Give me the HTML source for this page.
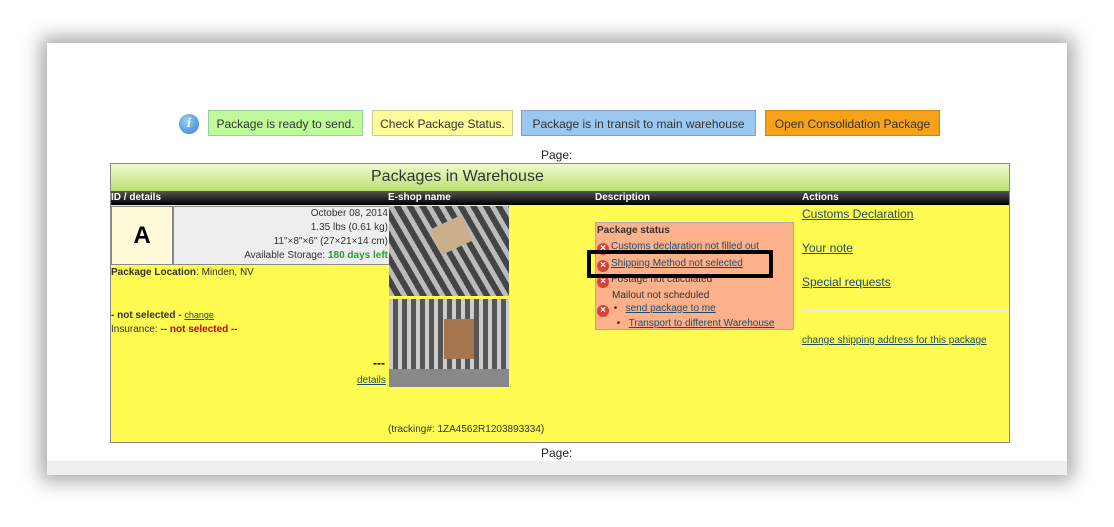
<!DOCTYPE html>
<html><head><meta charset="utf-8"><style>
body{margin:0;width:1114px;height:527px;background:#fff;position:relative;overflow:hidden;font-family:"Liberation Sans",sans-serif;}
.frame{position:absolute;left:47px;top:43px;width:1020px;height:432px;background:#fff;box-shadow:0 0 18px 6px rgba(0,0,0,.35);}
.band{position:absolute;left:0;top:418px;width:1020px;height:14px;background:#eee;}
.a{position:absolute;}
.box{position:absolute;top:110px;height:26px;line-height:26px;font-size:12px;color:#333;border:1px solid;text-align:center;box-sizing:border-box;}
.lnk{color:#1a4d6e;text-decoration:underline;}
.sm{font-size:10px;}
.x{display:inline-block;width:12px;height:12px;border-radius:50%;background:#d9413a;color:#fff;font-size:10px;font-weight:bold;line-height:12px;text-align:center;vertical-align:-2px;margin-right:2px}
</style></head><body>
<div class="frame"><div class="band"></div></div>
<div class="a" style="left:179px;top:114px;width:20px;height:20px;border-radius:50%;background:radial-gradient(circle at 40% 35%,#9cd0f5,#2a7fd0);color:#fff;font:italic bold 14px 'Liberation Serif',serif;text-align:center;line-height:20px">i</div>
<div class="box" style="left:208px;width:155px;background:#bff99a;border-color:#9c9">Package is ready to send.</div>
<div class="box" style="left:372px;width:141px;background:#fffb99;border-color:#cc9">Check Package Status.</div>
<div class="box" style="left:521px;width:235px;background:#9cc8f0;border-color:#89b">Package is in transit to main warehouse</div>
<div class="box" style="left:765px;width:175px;background:#f7a21b;border-color:#c80">Open Consolidation Package</div>
<div class="a" style="left:541px;top:148px;font-size:12px;color:#222">Page:</div>
<div class="a" style="left:110px;top:163px;width:900px;height:280px;background:#fffb50;border:1px solid #888;box-sizing:border-box;"></div>
<div class="a" style="left:111px;top:164px;width:898px;height:27px;background:linear-gradient(#f2fbd0,#b8e070);"></div>
<div class="a" style="left:371px;top:168px;font-size:16px;color:#333">Packages in Warehouse</div>
<div class="a" style="left:111px;top:191px;width:898px;height:14px;background:linear-gradient(#555,#000);color:#fff;font-size:10px;font-weight:bold;line-height:14px">
<span class="a" style="left:0">ID / details</span><span class="a" style="left:277px">E-shop name</span><span class="a" style="left:484px">Description</span><span class="a" style="left:691px">Actions</span></div>
<div class="a" style="left:111px;top:206px;width:60px;height:57px;background:#fffbd8;border:1px solid #888;font:bold 24px 'Liberation Sans',sans-serif;text-align:center;line-height:57px">A</div>
<div class="a" style="left:173px;top:206px;width:214px;height:57px;background:#eee;border:1px solid #888;font-size:10px;color:#333;text-align:right;line-height:14px;padding-right:1px">October 08, 2014<br>1.35 lbs (0.61 kg)<br>11"×8"×6" (27×21×14 cm)<br>Available Storage: <b style="color:#2a9a3a">180 days left</b></div>
<div class="a" style="left:111px;top:267px;font-size:10px;color:#333"><b>Package Location</b>: Minden, NV</div>
<div class="a" style="left:111px;top:310px;font-size:10px;color:#333"><b>- not selected -</b> <span class="lnk" style="font-size:9px">change</span></div>
<div class="a" style="left:111px;top:324px;font-size:10px;color:#333">Insurance: <b style="color:#c00">-- not selected --</b></div>
<div class="a" style="left:373px;top:356px;font-size:12px;font-weight:bold">---</div>
<div class="a lnk sm" style="left:357px;top:375px">details</div>
<div class="a" style="left:389px;top:206px;width:120px;height:90px;background:repeating-linear-gradient(60deg,#bbb 0 5px,#444 5px 11px);"><div class="a" style="left:45px;top:15px;width:35px;height:28px;background:#c9b08a;transform:rotate(-25deg)"></div></div>
<div class="a" style="left:389px;top:299px;width:120px;height:88px;background:repeating-linear-gradient(90deg,#ccc 0 4px,#555 4px 9px);"><div class="a" style="left:55px;top:20px;width:30px;height:40px;background:#a57550"></div><div class="a" style="left:0;top:70px;width:120px;height:18px;background:#888"></div></div>
<div class="a" style="left:388px;top:424px;font-size:10px;color:#333">(tracking#: 1ZA4562R1203893334)</div>
<div class="a" style="left:595px;top:222px;width:199px;height:108px;background:#fdb18a;border:1px solid #aaa;box-sizing:border-box;font-size:10px;color:#333"></div>
<div class="a" style="left:597px;top:225px;font-size:10px;font-weight:bold;color:#333">Package status</div>
<div class="a" style="left:597px;top:239px;font-size:10px;color:#333;line-height:16.5px">
<div><span class="x">×</span><span class="lnk">Customs declaration not filled out</span></div>
<div><span class="x">×</span><span class="lnk">Shipping Method not selected</span></div>
<div><span class="x">×</span>Postage not calculated</div>
<div style="padding-left:15px;line-height:13px">Mailout not scheduled</div>
<div style="line-height:14px"><span class="x">×</span> • &nbsp;&nbsp;<span class="lnk">send package to me</span></div>
<div style="padding-left:17px;line-height:14px">&nbsp;• &nbsp;&nbsp;<span class="lnk">Transport to different Warehouse</span></div>
</div>
<div class="a" style="left:587px;top:250px;width:178px;height:20px;border:4px solid #000"></div>
<div class="a lnk" style="left:802px;top:207px;font-size:12px">Customs Declaration</div>
<div class="a lnk" style="left:802px;top:241px;font-size:12px">Your note</div>
<div class="a lnk" style="left:802px;top:275px;font-size:12px">Special requests</div>
<div class="a" style="left:802px;top:310px;width:207px;height:1px;background:#eee"></div>
<div class="a lnk sm" style="left:802px;top:335px">change shipping address for this package</div>
<div class="a" style="left:541px;top:446px;font-size:12px;color:#222">Page:</div>
</body></html>
